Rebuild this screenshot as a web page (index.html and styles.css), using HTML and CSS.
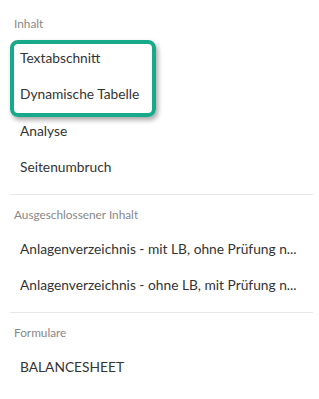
FILE: index.html
```html
<!DOCTYPE html>
<html lang="de">

<head>
    <meta charset="UTF-8">
    <meta name="viewport" content="width=device-width, initial-scale=1.0">
    <title>Inhalte</title>
    <link rel="stylesheet" href="styles.css">
</head>

<body>
    <div class="panel">
        <div class="section">
            <div class="section-title">Inhalt</div>
            <div class="highlight-group">
                <div class="item">Textabschnitt</div>
                <div class="item">Dynamische Tabelle</div>
                <div class="highlight"></div>
            </div>
            <div class="item">Analyse</div>
            <div class="item">Seitenumbruch</div>
        </div>

        <div class="section">
            <div class="section-title">Ausgeschlossener Inhalt</div>
            <div class="item">Anlagenverzeichnis - mit LB, ohne Prüfung n...</div>
            <div class="item">Anlagenverzeichnis - ohne LB, mit Prüfung n...</div>
        </div>

        <div class="section">
            <div class="section-title">Formulare</div>
            <div class="item">BALANCESHEET</div>
        </div>
    </div>
</body>

</html>
```

FILE: styles.css
```css
* {
    margin: 0;
    padding: 0;
    box-sizing: border-box;
    font-family: 'Lato', 'Liberation Sans', sans-serif;
}

body {
    background: #ffffff;
}

.panel {
    padding: 14px 6px 0 10px;
}

.section {
    padding-bottom: 9px;
    border-bottom: 1px solid #e8e8e8;
    margin-bottom: 10px;
}

.section:last-child {
    border-bottom: none;
}

.section-title {
    font-size: 11.8px;
    line-height: 20px;
    color: #888888;
    padding-left: 4px;
    margin-bottom: 6px;
}

.item {
    font-size: 13.75px;
    line-height: 36px;
    height: 36px;
    color: #333333;
    padding-left: 10px;
    white-space: nowrap;
}

.highlight-group {
    position: relative;
    padding-bottom: 1px;
}

.highlight {
    position: absolute;
    left: 0;
    top: 0;
    width: 146px;
    height: 77px;
    border: 4px solid #16a98a;
    border-radius: 8px;
    box-shadow: 2px 3px 5px rgba(0, 0, 0, 0.35);
}
```
